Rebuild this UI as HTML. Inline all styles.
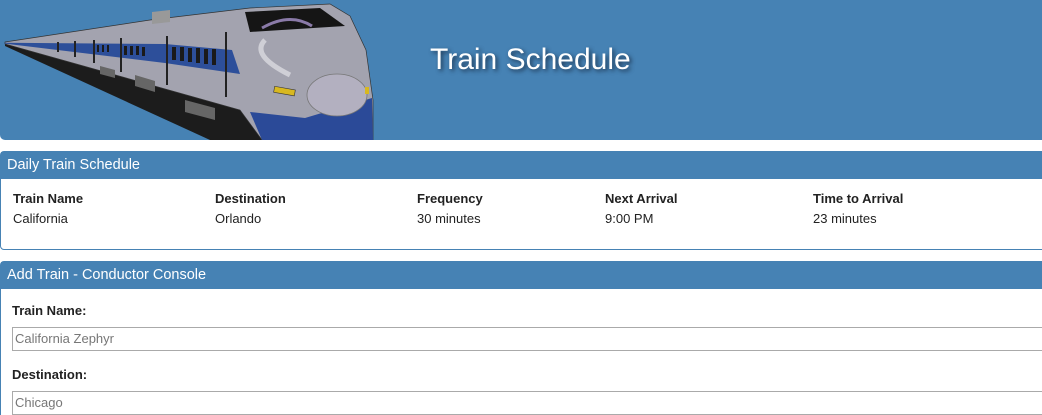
<!DOCTYPE html>
<html><head><meta charset="utf-8"><style>
html,body{margin:0;height:415px;overflow:hidden}
body{background:#fff;font-family:"Liberation Sans",Arial,sans-serif;width:1042px;position:relative}
.hdr{position:absolute;left:0;top:0;width:1050px;height:140px;background:#4682b4;border-radius:0 0 0 5px;overflow:hidden}
.hdr h1{position:absolute;left:430px;top:43px;margin:0;font-weight:normal;font-size:30px;color:#fff;text-shadow:2px 2px 4px #1d3550}
.panel{position:absolute;left:0;width:1060px;border:1px solid #4682b4;border-radius:4px;box-sizing:border-box}
.ph{background:#4682b4;color:#fff;font-size:14.5px;height:27px;line-height:27px;padding-left:6px}
.col{position:absolute;font-size:13px;color:#222}
.col b{display:block;margin-bottom:5px}
label{position:absolute;left:12px;font-size:13px;font-weight:bold;color:#222}
.inp{position:absolute;left:12px;width:1060px;height:24px;border:1px solid #aaa;box-sizing:border-box;font-size:13px;color:#777;line-height:22px;padding-left:2px}
</style></head><body>
<div class="hdr">
<svg width="380" height="140" style="position:absolute;left:0;top:0">
<polygon points="5,44 240,110 262,140 210,140 5,46" fill="#1c1c1c"/>
<polygon points="5,42 150,20 250,8 330,4 350,16 366,50 373,100 373,140 262,140 240,110 5,44" fill="#a3a3af" stroke="#333" stroke-width="0.7"/>
<polygon points="5,42.8 165,44 232,50 240,74 165,63 5,43.6" fill="#2d4f9a"/>
<g fill="#1a1a1a">
<rect x="172" y="47" width="4" height="13"/><rect x="180" y="47" width="4" height="14"/><rect x="188" y="48" width="4" height="14"/><rect x="196" y="48" width="4" height="15"/><rect x="204" y="49" width="4" height="15"/><rect x="212" y="49" width="4" height="16"/>
<rect x="124" y="46" width="3" height="9"/><rect x="130" y="46" width="3" height="9"/><rect x="136" y="46" width="3" height="9"/><rect x="142" y="47" width="3" height="9"/>
<rect x="97" y="45" width="2" height="7"/><rect x="102" y="45" width="2" height="7"/><rect x="107" y="45" width="2" height="7"/>
</g>
<g stroke="#222" stroke-width="2"><line x1="167" y1="36" x2="167" y2="85"/><line x1="121" y1="38" x2="121" y2="72"/><line x1="94" y1="40" x2="94" y2="63"/><line x1="75" y1="41" x2="75" y2="57"/><line x1="58" y1="42" x2="58" y2="52"/><line x1="226" y1="32" x2="226" y2="97"/></g>
<polygon points="152,12 170,10 170,22 152,24" fill="#999"/>
<g fill="#666"><polygon points="135,75 155,81 155,92 135,86"/><polygon points="185,100 215,108 215,120 185,112"/><polygon points="100,66 115,70 115,78 100,74"/></g>
<polygon points="245,12 320,8 345,26 250,32" fill="#151515"/>
<path d="M262,28 Q290,12 312,26" stroke="#8a7aa8" stroke-width="3" fill="none"/>
<path d="M265,40 Q250,55 290,75" stroke="#cfcfd6" stroke-width="5" fill="none"/>
<polygon points="250,112 305,118 372,98 373,140 262,140" fill="#2b4a98"/>
<ellipse cx="337" cy="95" rx="30" ry="21" fill="#b3b0c0" stroke="#777" stroke-width="0.8"/>
<rect x="274" y="88" width="21" height="6" fill="#d8b820" stroke="#333" stroke-width="0.6" transform="rotate(10 284 91)"/>
<rect x="365" y="87" width="4" height="7" fill="#d8b820"/>
</svg>
<h1>Train Schedule</h1>
</div>
<div class="panel" style="top:151px;height:99px">
<div class="ph">Daily Train Schedule</div>
<div class="col" style="left:12px;top:39px"><b>Train Name</b>California</div>
<div class="col" style="left:214px;top:39px"><b>Destination</b>Orlando</div>
<div class="col" style="left:416px;top:39px"><b>Frequency</b>30 minutes</div>
<div class="col" style="left:604px;top:39px"><b>Next Arrival</b>9:00 PM</div>
<div class="col" style="left:812px;top:39px"><b>Time to Arrival</b>23 minutes</div>
</div>
<div class="panel" style="top:261px;height:200px">
<div class="ph">Add Train - Conductor Console</div>
</div>
<label style="top:303px">Train Name:</label>
<div class="inp" style="top:327px">California Zephyr</div>
<label style="top:367px">Destination:</label>
<div class="inp" style="top:391px">Chicago</div>
</body></html>
